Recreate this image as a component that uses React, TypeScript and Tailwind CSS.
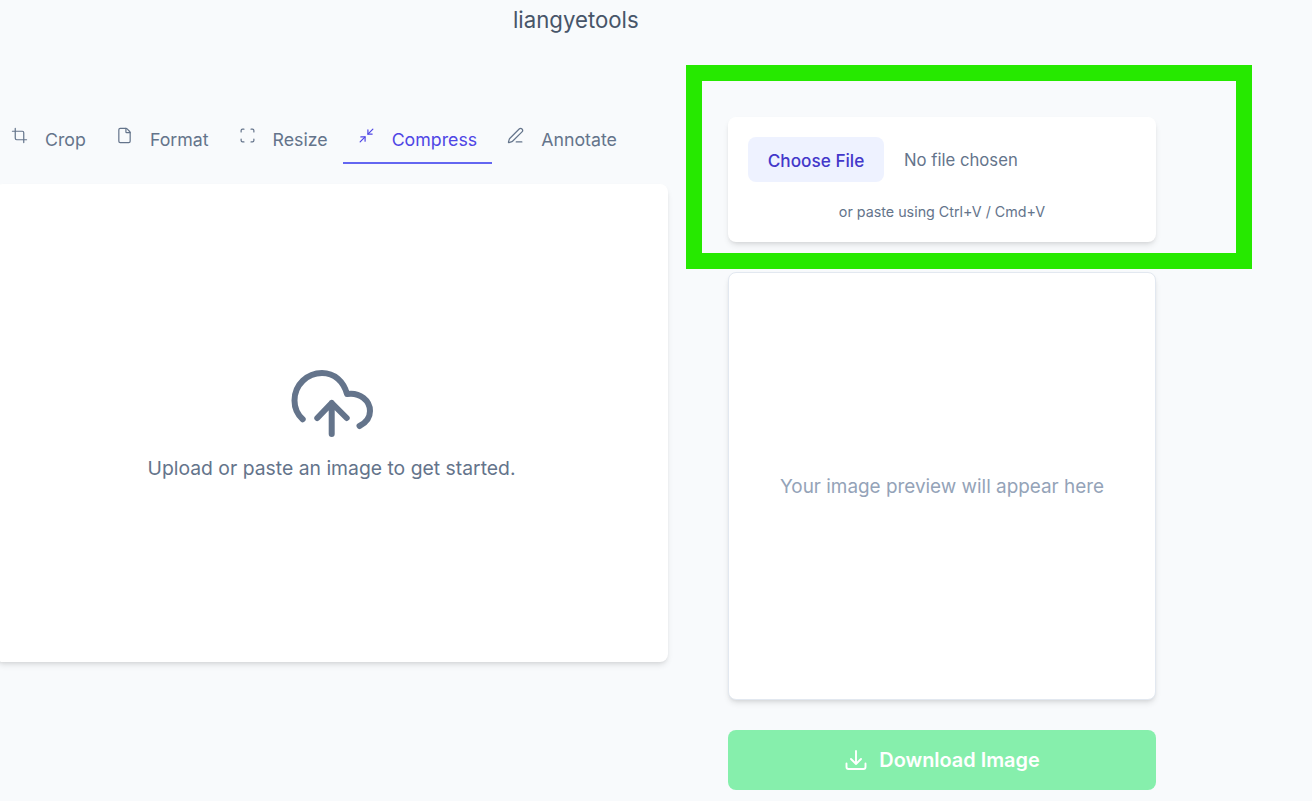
import { Crop, File, Minimize2, PenLine, Scan, type LucideIcon } from 'lucide-react';

interface Tab {
  label: string;
  icon: LucideIcon;
  active?: boolean;
}

const tabs: Tab[] = [
  { label: 'Crop', icon: Crop },
  { label: 'Format', icon: File },
  { label: 'Resize', icon: Scan },
  { label: 'Compress', icon: Minimize2, active: true },
  { label: 'Annotate', icon: PenLine },
];

function UploadCloud() {
  return (
    <svg viewBox="20 18 84 70" className="w-[84px] h-[70px] text-[#64748b]" fill="none" stroke="currentColor" strokeWidth="6" strokeLinecap="round" strokeLinejoin="round">
      <path d="M32.7 68.3C27.5 63.5 24.5 57 24.5 49.5C24.5 33.5 37.5 22 52 22C64.5 22 73.5 30.5 77 43C90 41 100 49.5 100 60C100 66.5 95.5 72 89.5 75" />
      <path d="M61.7 83V52M47.3 67L61.7 52L76.7 67" />
    </svg>
  );
}

function DownloadTray() {
  return (
    <svg viewBox="0 0 24 24" className="w-[24px] h-[24px]" fill="none" stroke="currentColor" strokeWidth="1.9" strokeLinecap="round" strokeLinejoin="round">
      <path d="M2.5 15.5V19a2 2 0 0 0 2 2h15a2 2 0 0 0 2-2v-3.5" />
      <path d="M12 3v13M7 11l5 5 5-5" />
    </svg>
  );
}

export default function App() {
  return (
    <div className="h-[801px] w-[1312px] overflow-hidden bg-[#f8fafc] font-['Inter',sans-serif] flex">
      {/* Left column */}
      <div className="w-[668px] shrink-0 flex flex-col">
        <h1 className="h-[40px] pl-[513px] pt-[3px] text-[22.2px] leading-[33px] text-[#475569] whitespace-nowrap">liangyetools</h1>
        <div className="mt-[74px] h-[50px] flex -ml-[4px]">
          {tabs.map((tab) => (
            <div
              key={tab.label}
              className={`h-[50px] px-[15px] flex gap-[17px] border-b-2 ${tab.active ? 'border-[#6366f1] text-[#4f46e5]' : 'border-transparent text-[#64748b]'}`}
            >
              <tab.icon className="w-[17px] h-[17px] mt-[13px]" strokeWidth={1.7} />
              <span className="text-[17.75px] leading-[24px] mt-[14px]">{tab.label}</span>
            </div>
          ))}
        </div>
        <div className="mt-[20px] -ml-[5px] h-[478px] w-[673px] pt-[5px] bg-white rounded-lg shadow-md flex flex-col items-center justify-center">
          <UploadCloud />
          <p className="mt-[15px] text-[19.35px] leading-[28px] text-[#64748b]">Upload or paste an image to get started.</p>
        </div>
      </div>

      {/* Right column */}
      <div className="ml-[18px] pt-[65px] flex flex-col">
        <div className="w-[566px] h-[204px] border-[16px] border-[#26e900] pl-[26px] pt-[36px]">
          <div className="w-[428px] h-[125px] bg-white rounded-lg shadow-md px-[20px] pt-[20px]">
            <div className="flex items-center">
              <button className="h-[45px] w-[136px] pt-[2px] rounded-lg bg-[#eef2ff] text-[#4338ca] text-[17.2px] font-medium">Choose File</button>
              <span className="ml-[20px] pt-[2px] text-[16.7px] text-[#64748b]">No file chosen</span>
            </div>
            <p className="mt-[20px] text-center text-[14.3px] leading-[20px] text-[#64748b]">or paste using Ctrl+V / Cmd+V</p>
          </div>
        </div>
        <div className="mt-[3px] ml-[42px] w-[428px] h-[428px] bg-white border border-[#e2e8f0] rounded-lg shadow-md flex items-center justify-center">
          <p className="pt-[2px] text-[18.9px] leading-[28px] text-[#94a3b8]">Your image preview will appear here</p>
        </div>
        <button className="mt-[30px] ml-[42px] w-[428px] h-[60px] rounded-lg bg-[#86efac] text-white text-[19.9px] font-semibold flex items-center justify-center gap-[11px]">
          <DownloadTray />
          <span className="pt-[2px]">Download Image</span>
        </button>
      </div>
    </div>
  );
}
